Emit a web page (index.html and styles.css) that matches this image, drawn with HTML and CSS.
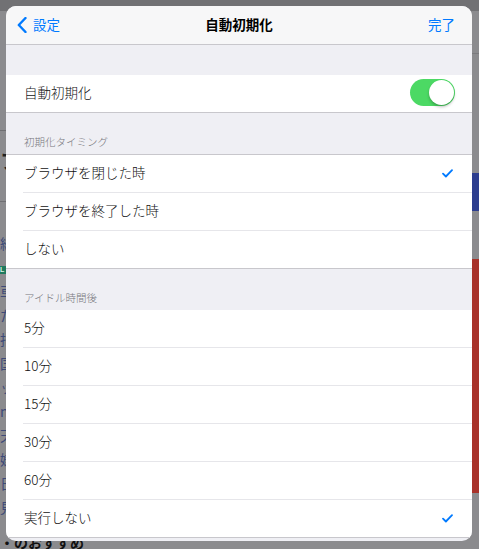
FILE: index.html
```html
<!DOCTYPE html>
<html lang="ja">
<head>
  <meta charset="UTF-8" />
  <meta name="viewport" content="width=device-width, initial-scale=1.0" />
  <title>自動初期化</title>
  <link rel="stylesheet" href="styles.css">
</head>
<body>
  <!-- dimmed page behind the sheet -->
  <div class="page">
    <div class="page-top"></div>
    <div class="page-body">
      <div class="page-main">
        <div class="pm-head">フ</div>
        <div class="pm-rule"></div>
        <div class="pm-line">総</div>
        <div class="pm-badge">L</div>
        <div class="pm-line">車</div>
        <div class="pm-line">た</div>
        <div class="pm-line">指</div>
        <div class="pm-line">国</div>
        <div class="pm-line">ッ</div>
        <div class="pm-line">ns</div>
        <div class="pm-line">天</div>
        <div class="pm-line">嫌</div>
        <div class="pm-line">日</div>
        <div class="pm-line">見</div>
        <div class="pm-foot">・のおすすめ</div>
      </div>
      <div class="page-side">
        <div class="ps-rule"></div>
        <div class="ps-blue"></div>
        <div class="ps-text">領</div>
        <div class="ps-red"></div>
        <div class="ps-text">御</div>
      </div>
    </div>
  </div>

  <div class="sheet">
    <div class="nav">
      <a class="nav-back">
        <svg width="10" height="16" viewBox="0 0 10 16"><path d="M8.5 1 L1.8 8 L8.5 15" fill="none" stroke="#007aff" stroke-width="2.4" stroke-linecap="round" stroke-linejoin="round"/></svg>
        <span>設定</span>
      </a>
      <div class="nav-title">自動初期化</div>
      <a class="nav-done">完了</a>
    </div>

    <div class="spacer"></div>

    <ul class="group">
      <li class="row">
        <span>自動初期化</span>
        <span class="toggle"><span class="knob"></span></span>
      </li>
    </ul>

    <div class="group-title">初期化タイミング</div>
    <ul class="group bordered">
      <li class="row">ブラウザを閉じた時<svg class="check" width="11" height="9" viewBox="0 0 11 9"><path d="M1 4.6 L3.9 7.5 L10 1.2" fill="none" stroke="#007aff" stroke-width="1.8" stroke-linecap="round" stroke-linejoin="round"/></svg></li>
      <li class="row">ブラウザを終了した時</li>
      <li class="row">しない</li>
    </ul>

    <div class="group-title">アイドル時間後</div>
    <ul class="group">
      <li class="row">5分</li>
      <li class="row">10分</li>
      <li class="row">15分</li>
      <li class="row">30分</li>
      <li class="row">60分</li>
      <li class="row">実行しない<svg class="check" width="11" height="9" viewBox="0 0 11 9"><path d="M1 4.6 L3.9 7.5 L10 1.2" fill="none" stroke="#007aff" stroke-width="1.8" stroke-linecap="round" stroke-linejoin="round"/></svg></li>
    </ul>
  </div>
</body>
</html>
```

FILE: styles.css
```css
body { margin: 0; background: #8b8b8e; font-family: "Noto Sans CJK JP", "Noto Sans", sans-serif; overflow: hidden; }

/* page behind */
.page { height: 549px; overflow: hidden; }
.page-top { height: 11px; background: #717174; }
.page-body { display: grid; grid-template-columns: 1fr 120px; align-items: start; }
.page-main { padding-top: 119px; color: #3e4a78; font-size: 14px; }
.pm-head { font-size: 20px; font-weight: bold; color: #1f1f22; line-height: 60px; height: 70px; border-top: 1px solid #6f6f72; }
.pm-rule { height: 30px; border-top: 1px solid #6f6f72; }
.pm-line { line-height: 22px; height: 24px; overflow: hidden; }
.pm-badge { width: 30px; height: 8px; background: #1f7a5e; color: #d9f0e6; font-family: "Liberation Sans", sans-serif; font-size: 7px; line-height: 8px; font-weight: bold; margin: 10px 0 6px; }
.pm-foot { margin-top: 12px; font-weight: bold; color: #111; line-height: 20px; }
.page-side { padding-top: 42px; }
.ps-rule { height: 119px; border-top: 1px solid #7a7a7d; }
.ps-blue { height: 38px; background: #2c3d8e; }
.ps-text { height: 48px; line-height: 48px; color: #3e4a78; font-size: 14px; overflow: hidden; }
.ps-red { height: 234px; background: #a8322a; }

/* sheet */
.sheet { position: absolute; top: 6px; left: 6px; width: 466px; height: 535px; background: #efeff4; border-radius: 10px; overflow: hidden; }
.nav { border-bottom: 1px solid #c8c7cc; background: #f7f7f8; display: flex; align-items: center; justify-content: space-between; padding: 0 17px 2px 11px; box-sizing: border-box; height: 39px; position: relative; }
.nav-back { display: flex; align-items: center; gap: 6px; color: #007aff; font-size: 13.5px; }
.nav-back svg { margin-top: 2px; }
.nav-title { position: absolute; left: 0; right: 0; text-align: center; font-size: 13.5px; font-weight: bold; color: #000; pointer-events: none; }
.nav-done { color: #007aff; font-size: 13.5px; }

.spacer { height: 30px; }
.group { list-style: none; margin: 0; padding: 0; background: #fff; border-bottom: 1px solid #c8c7cc; }
.group.bordered { border-top: 1px solid #c8c7cc; }
.row { margin-left: 17px; padding: 0 18px 3px 1px; box-sizing: border-box; height: 38px; display: flex; align-items: center; justify-content: space-between; font-size: 13.5px; font-weight: 300; color: #111; border-bottom: 1px solid #e6e6ea; }
.row:last-child { border-bottom: none; height: 37px; }
.group-title { height: 41px; box-sizing: border-box; padding: 22px 18px 0; font-size: 10.5px; line-height: 14px; font-weight: 300; color: #77777d; }

.toggle { width: 45px; height: 27px; border-radius: 14px; background: #4cd964; position: relative; margin-right: -1px; }
.knob { position: absolute; top: 1px; right: 1px; width: 25px; height: 25px; border-radius: 50%; background: #fff; box-shadow: 0 2px 3px rgba(0,0,0,0.25); }
.check { margin: 3px 1px 0 0; }
```
